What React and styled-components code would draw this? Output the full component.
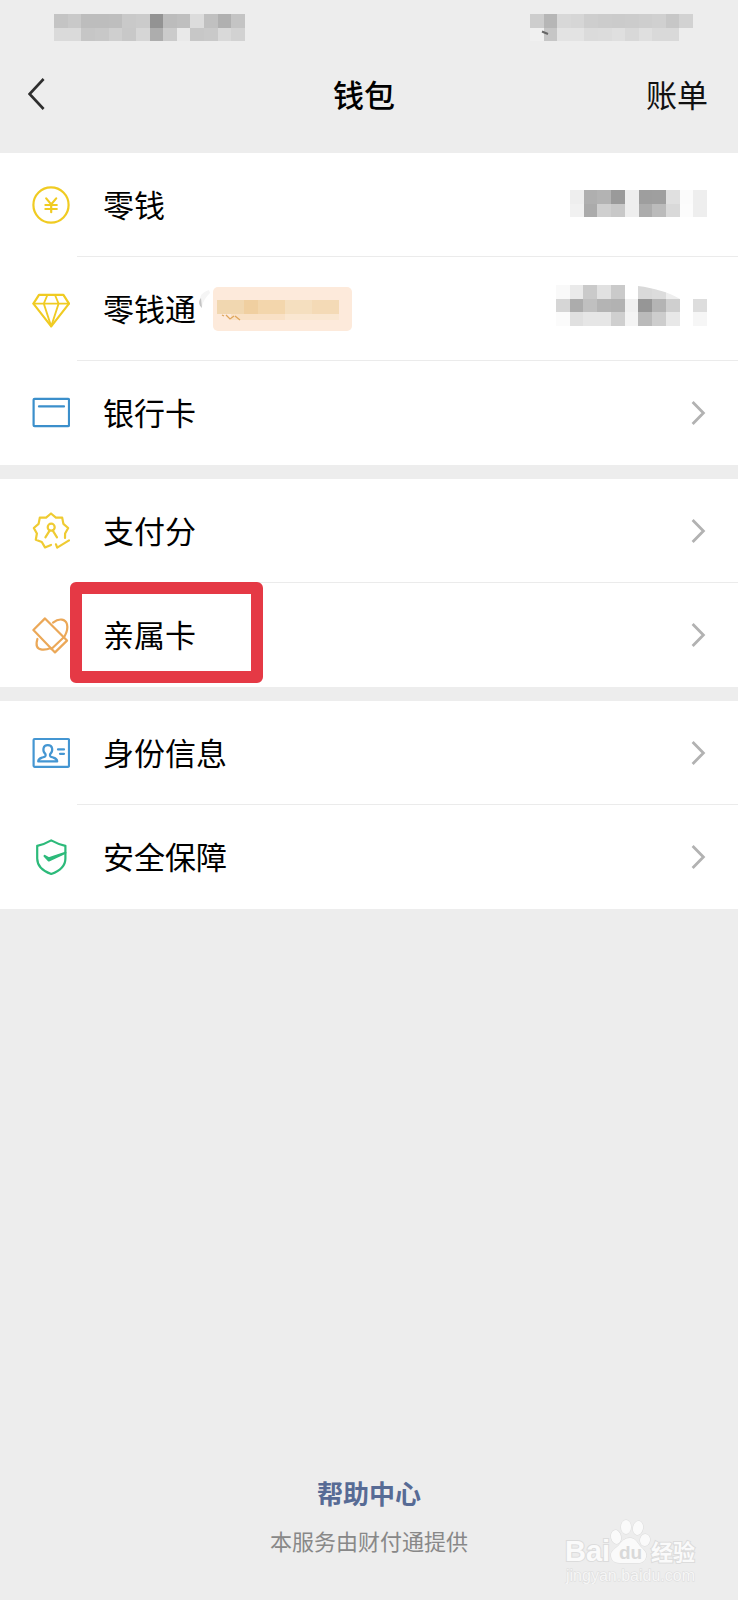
import React from 'react';
import styled, { createGlobalStyle } from 'styled-components';

const GlobalStyle = createGlobalStyle`
    * {
        box-sizing: border-box;
    }

    body {
        margin: 0;
        background-color: #ededed;
        color: #000;
        font-family: 'Noto Sans CJK SC', 'Noto Sans', sans-serif;
    }

    svg {
        display: block;
        flex-shrink: 0;
    }
`;

const Page = styled.div`
    position: relative;
    display: flex;
    flex-direction: column;
    min-height: 100vh;
`;

const StatusBar = styled.div`
    display: flex;
    justify-content: space-between;
    padding: 14px 45px 0 54px;
    height: 55px;
`;

const NavBar = styled.header`
    display: grid;
    grid-template-columns: 1fr auto 1fr;
    align-items: center;
    height: 98px;
    padding: 0 30px 21px 20px;
`;

const BackButton = styled.button`
    justify-self: start;
    padding: 8px;
    border: 0;
    background: none;
    cursor: pointer;
`;

const Title = styled.h1`
    margin: 0;
    font-size: 31px;
    font-weight: 500;
    line-height: 40px;
`;

const BillLink = styled.a`
    justify-self: end;
    color: #111;
    font-size: 31px;
    line-height: 40px;
    text-decoration: none;
`;

const Groups = styled.main`
    display: flex;
    flex-direction: column;
    gap: 14px;
`;

const Group = styled.nav`
    background-color: #fff;
`;

const Row = styled.a`
    position: relative;
    display: flex;
    align-items: center;
    color: inherit;
    text-decoration: none;
`;

const IconCell = styled.span`
    display: flex;
    width: 77px;
    padding-left: 32px;
`;

const RowBody = styled.span`
    display: flex;
    flex: 1;
    align-items: center;
    height: 104px;
    padding: 0 31px 0 26px;
    border-bottom: 1px solid #ebebeb;

    ${Row}:last-child & {
        border-bottom-color: transparent;
    }
`;

const Label = styled.span`
    padding-bottom: 2px;
    font-size: 31px;
    line-height: 40px;
`;

const Value = styled.span`
    margin-left: auto;
`;

const Highlight = styled.span`
    position: absolute;
    top: -1px;
    left: 70px;
    width: 193px;
    height: 101px;
    border: 12px solid #e53945;
    border-radius: 6px;
    pointer-events: none;
`;

const Footer = styled.footer`
    display: flex;
    flex-direction: column;
    align-items: center;
    gap: 13px;
    margin-top: auto;
    padding-bottom: 44px;
`;

const HelpLink = styled.a`
    color: #576b95;
    font-size: 26px;
    font-weight: 700;
    line-height: 36px;
    text-decoration: none;
`;

const Provider = styled.p`
    margin: 0;
    color: #888;
    font-size: 22px;
    line-height: 32px;
`;

const Watermark = styled.div`
    position: absolute;
    right: 38px;
    bottom: 16px;
`;

// Censored text, one grey level per cell, null leaves the cell empty
const Mosaic = ({ cells, width, height, children }) => {
    const cols = cells[0].length;
    return (
        <svg width={width} height={height} viewBox={`0 0 ${width} ${height}`} shapeRendering="crispEdges" aria-hidden="true">
            {cells.map((line, y) =>
                line.map((color, x) => color && (
                    <rect
                        key={`${x}-${y}`}
                        x={Math.round(x * width / cols)}
                        y={Math.round(y * 13.7)}
                        width={Math.round((x + 1) * width / cols) - Math.round(x * width / cols)}
                        height={Math.round((y + 1) * 13.7) - Math.round(y * 13.7)}
                        fill={`#${color}`}
                    />
                ))
            )}
            {children}
        </svg>
    );
};

const grey = (text) => text.split(' ').map((level) => (level === '--' ? null : level.repeat(3)));

const CARRIER = [
    grey('c4 c9 bd bd be c9 cb 93 bc bf dc c0 b0 c4'),
    grey('da da c6 c8 cf c8 d6 ad cb e9 c7 c9 d9 d2'),
];
const BATTERY = [
    grey('cd b6 d8 d6 ce cc cb cc ce d0 c7 d2'),
    grey('f0 c6 e3 e3 db dc df d8 df d9 d9 --'),
];
const BALANCE = [
    grey('ee af b3 9a ee 9e 9f e0 fb ee'),
    grey('f1 ab cf c8 ee ac bb d9 fc ee'),
];
const FUND = [
    grey('f9 ea ca e1 ca -- d9 dc ee -- --'),
    grey('d6 ac c0 b4 b2 f0 96 b4 cf -- dd'),
    grey('fb e0 e6 e6 cf f4 ba cd e8 -- f6'),
];

const Icon = ({ color, children }) => (
    <svg width="38" height="38" viewBox="0 0 38 38" fill="none" stroke={color} strokeWidth="2.2" strokeLinecap="round" strokeLinejoin="round" aria-hidden="true">
        {children}
    </svg>
);

const BalanceIcon = () => (
    <Icon color="#f0cb22">
        <circle cx="19" cy="19" r="17.6" />
        <path d="M14.2 12.4l5 6 5-6M13.400 19h11.400M13.400 23h11.400M19.200 18.400v7.800" />
    </Icon>
);

const DiamondIcon = () => (
    <Icon color="#f0cb22">
        <path d="M7 4.8h24.4L37 13.6 19.2 36.4 1.4 13.6z" />
        <path d="M1.4 13.6H37M15.4 5l-3.600 8.600 7.400 22.800 7.400-22.800L23 5" strokeWidth="1.8" />
    </Icon>
);

const CardIcon = () => (
    <Icon color="#3b8fcb">
        <rect x="1.6" y="4.8" width="35.4" height="27.4" rx="1" />
        <path d="M7 12.4h25" />
    </Icon>
);

const ScoreIcon = () => (
    <Icon color="#efcb32">
        <path d="M33 26l.1-4.5 3.1-5.5-4.8-4.1-1.2-6.3h-6.3L19 1.500l-4.900 4.100H7.800L6.600 11.900 1.800 16l3.100 5.500-1.100 6.300 6 2.200 3.200 5.400 6-2.400" />
        <path d="M24 32.4l1.2 3.2L37 28.4" />
        <circle cx="19.2" cy="15.2" r="3.5" />
        <path d="M17.6 18.6L13.4 25.4M20.8 18.6l4.2 6.8" />
    </Icon>
);

const FamilyIcon = () => (
    <Icon color="#eba858">
        <path d="M13 2.4L1.4 14 23 36.4l12-11.8z" />
        <path d="M19.4 33l12.4-11.8" />
        <path d="M21 6.6c6.5-5 12.5-3.5 14 1.6.9 3.6 0 7.8-2.4 12" />
        <path d="M5.4 23c-2 6.5-.6 10 4.6 10.6 3.2.3 6-.4 8.8-1.6" />
    </Icon>
);

const IdentityIcon = () => (
    <Icon color="#4496d2">
        <rect x="1.6" y="5" width="35.4" height="27.8" rx="1" />
        <path d="M13.6 20.4c-3.600-3.400-2.800-9.200 2.200-9.200s5.800 5.800 2.200 9.200c-.6 2.200 1.200 2.600 3.400 3.200 2.600.8 3.800 1.400 3.800 3.800H6.200c0-2.400 1.200-3 3.800-3.800 2.200-.6 4.200-1 3.600-3.200z" />
        <path d="M26 15.400h6M28 19.800h4" />
    </Icon>
);

const ShieldIcon = () => (
    <Icon color="#2cba7a">
        <path d="M19.2 2.4c4.600 2.600 9 4.400 14.200 5.400v12.600c0 7-5.400 12.400-14.200 15.600C10.400 32.800 5.200 27.400 5.200 20.400V7.800c5-1 9.600-2.800 14-5.400z" />
        <path d="M12.6 18l4.200 4.400 16.600-7.600-16.400 5.600z" fill="#2cba7a" />
    </Icon>
);

const Chevron = () => (
    <svg width="16" height="26" viewBox="0 0 16 26" fill="none" stroke="#b2b2b2" strokeWidth="2.8" aria-hidden="true">
        <path d="M1.6 2L12.400 13 1.600 24" />
    </svg>
);

const PromoTag = () => (
    <svg width="162" height="48" viewBox="0 0 162 48" aria-hidden="true">
        <path d="M13 5C4 8 2 13 6 22c1-6 4-10 8-14z" fill="#f5f5f5" />
        <path d="M5 13c-3 3-2 8 1 10z" fill="#c4c4c4" />
        <rect x="17" y="2" width="139" height="44" rx="5" fill="#fdeadb" />
        <g shapeRendering="crispEdges">
            <rect x="21" y="15" width="27" height="14" fill="#f1d7b0" />
            <rect x="48" y="15" width="14" height="14" fill="#f0cfa0" />
            <rect x="62" y="15" width="27" height="14" fill="#f3d6ac" />
            <rect x="89" y="15" width="27" height="14" fill="#f5dfbf" />
            <rect x="116" y="15" width="27" height="14" fill="#f4dab6" />
            <rect x="35" y="29" width="54" height="6" fill="#f9e1c6" />
            <rect x="89" y="29" width="54" height="6" fill="#fae7d1" />
        </g>
        <path d="M26 30l2 1M30 30l4 4 4-3M39 31l5 4" fill="none" stroke="#dfa65c" strokeWidth="1.3" />
    </svg>
);

const BaiduMark = () => (
    <svg width="136" height="72" viewBox="0 0 136 72" fill="#fafafa" stroke="#dcdcdc" strokeWidth="1" paintOrder="stroke">
        <text x="1" y="49" fontFamily="Liberation Sans, sans-serif" fontSize="29" fontWeight="700" strokeWidth="2">Bai</text>
        <ellipse cx="52" cy="25" rx="5" ry="7" transform="rotate(-12 52 25)" />
        <ellipse cx="62" cy="15" rx="5" ry="7" />
        <ellipse cx="74" cy="16" rx="5" ry="7" transform="rotate(10 74 16)" />
        <ellipse cx="81" cy="28" rx="5" ry="6" transform="rotate(12 81 28)" />
        <path d="M66 26c5 0 7 4 10 8 4 4 7 6 6 11-1 4-4 6-8 6H56c-6 0-9-3-9-8 0-4 4-6 8-10 3-4 6-7 11-7z" />
        <text x="55" y="47" fontFamily="Liberation Sans, sans-serif" fontSize="19" fontWeight="700" fill="#d9d9d9" stroke="none">du</text>
        <text x="87" y="48" fontSize="22" fontWeight="700" strokeWidth="2">经验</text>
        <text x="2" y="69" fontFamily="Liberation Sans, sans-serif" fontSize="16" fill="#f6f6f6">jingyan.baidu.com</text>
    </svg>
);

const GROUPS = [
    {
        name: '资产',
        rows: [
            { label: '零钱', icon: BalanceIcon, value: <Mosaic cells={BALANCE} width={137} height={30} /> },
            {
                label: '零钱通',
                icon: DiamondIcon,
                tag: <PromoTag />,
                value: (
                    <Mosaic cells={FUND} width={151} height={47}>
                        <path d="M82 0h42v14C112 7 98 3 82 1z" fill="#fff" shapeRendering="auto" />
                    </Mosaic>
                ),
            },
            { label: '银行卡', icon: CardIcon },
        ],
    },
    {
        name: '服务',
        rows: [
            { label: '支付分', icon: ScoreIcon },
            { label: '亲属卡', icon: FamilyIcon, highlighted: true },
        ],
    },
    {
        name: '安全',
        rows: [
            { label: '身份信息', icon: IdentityIcon },
            { label: '安全保障', icon: ShieldIcon },
        ],
    },
];

/**
 * Wallet page: list of the accounts and services, with the help links at the bottom.
 * @returns {JSX.Element}
 * @constructor
 */
export default function App() {
    return (
        <>
            <GlobalStyle />
            <Page>
                <StatusBar>
                    <Mosaic cells={CARRIER} width={191} height={28} />
                    <Mosaic cells={BATTERY} width={163} height={28}>
                        <path d="M12 17.500l6 2.500" stroke="#666" strokeWidth="2" shapeRendering="auto" />
                    </Mosaic>
                </StatusBar>

                <NavBar>
                    <BackButton type="button" aria-label="返回">
                        <svg width="17" height="32" viewBox="0 0 17 32" fill="none" stroke="#2e2e2e" strokeWidth="2.6">
                            <path d="M15.6 1L1.600 16l14 15" />
                        </svg>
                    </BackButton>
                    <Title>钱包</Title>
                    <BillLink href="#bill">账单</BillLink>
                </NavBar>

                <Groups>
                    {GROUPS.map((group) => (
                        <Group key={group.name} aria-label={group.name}>
                            {group.rows.map(({ label, icon: RowIcon, tag, value, highlighted }) => (
                                <Row key={label} href={`#${label}`}>
                                    <IconCell><RowIcon /></IconCell>
                                    <RowBody>
                                        <Label>{label}</Label>
                                        {tag}
                                        <Value>{value || <Chevron />}</Value>
                                    </RowBody>
                                    {highlighted && <Highlight />}
                                </Row>
                            ))}
                        </Group>
                    ))}
                </Groups>

                <Footer>
                    <HelpLink href="#help">帮助中心</HelpLink>
                    <Provider>本服务由财付通提供</Provider>
                </Footer>

                <Watermark>
                    <BaiduMark />
                </Watermark>
            </Page>
        </>
    );
}
